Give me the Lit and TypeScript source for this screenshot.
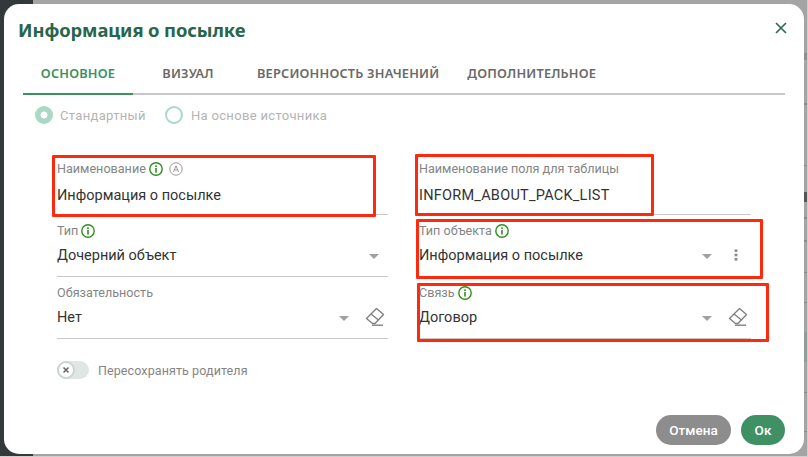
import { LitElement, html, css } from "lit";
import { customElement } from "lit/decorators.js";

const info = html`<svg class="ico" width="14" height="14" viewBox="0 0 14 14"><circle cx="7" cy="7" r="6.2" fill="none" stroke="#2f8f1f" stroke-width="1.4"/><rect x="6.2" y="6" width="1.6" height="4.6" fill="#2f8f1f"/><rect x="6.2" y="3.3" width="1.6" height="1.7" fill="#2f8f1f"/></svg>`;
const auto = html`<svg class="ico" width="14" height="14" viewBox="0 0 14 14"><circle cx="7" cy="7" r="6.2" fill="none" stroke="#999" stroke-width="1"/><path d="M4.4 10 L7 3.8 L9.6 10 M5.3 8 H8.7" fill="none" stroke="#999" stroke-width="1"/></svg>`;
const eraser = html`<svg class="eraser" width="20" height="20" viewBox="0 0 20 20"><path d="M11.5 1.5 L18.5 7.5 L10 16.5 H7.5 L1.5 11.5 Z M6 7 L13.5 13" fill="none" stroke="#808080" stroke-width="1.4" stroke-linejoin="round"/><path d="M7 18.2 H18" stroke="#808080" stroke-width="1.4"/></svg>`;
const kebab = html`<svg width="4" height="12" viewBox="0 0 4 12"><rect x="0.6" y="0.4" width="2.8" height="2.6" fill="#8a8a8a"/><rect x="0.6" y="4.7" width="2.8" height="2.6" fill="#8a8a8a"/><rect x="0.6" y="9" width="2.8" height="2.6" fill="#8a8a8a"/></svg>`;
const arrow = html`<span class="arrow"></span>`;

@customElement("app-root")
export class AppRoot extends LitElement {
  static styles = css`
    :host { display: block; width: 808px; height: 457px; box-sizing: border-box; padding: 4px 4px 3px 4px; overflow: hidden;
      box-shadow: inset -1px -1px 0 #cfcfcf;
      background:
        linear-gradient(180deg, transparent 53px, #8f8f8f 53px 60px, transparent 60px 103px, #8a8a8a 103px 105px, transparent 105px 165px, #8a8a8a 165px 166px, transparent 166px 192px, #555 192px 202px, transparent 202px 217px, #8a8a8a 217px 219px, transparent 219px 240px, #8a8a8a 240px 242px, transparent 242px 272px, #8a8a8a 272px 273px, transparent 273px 302px, #8a8a8a 302px 303px, transparent 303px 332px, #8e9e9a 332px 362px, transparent 362px 392px, #8a8a8a 392px 393px, transparent 393px 431px, #8a8a8a 431px 432px, transparent 432px) right 1px top 0 / 3px 100% no-repeat,
        linear-gradient(90deg, #33383b 33px, #a4a4a4 33px);
      font-family: "Roboto", "Noto Sans", sans-serif; }
    .dialog { position: relative; height: 450px; background: #fff; border-radius: 15px; display: flex; flex-direction: column; box-sizing: border-box; }
    .head { display: flex; justify-content: space-between; align-items: flex-start; padding: 14px 17px 0 14px; height: 47px; box-sizing: border-box; }
    .title { font-size: 18.4px; line-height: 24px; font-weight: 700; color: #27654d; font-family: "Noto Sans", sans-serif; letter-spacing: -0.1px; }
    .close { margin-top: 4px; }
    .tabs { display: flex; margin: 0 19px 0 19px; height: 42px; border-bottom: 2px solid #c8c8c8; box-sizing: content-box; }
    .tab { min-width: 110px; box-sizing: border-box; padding: 10px 14px 0; text-align: center; font-size: 12.8px; line-height: 24px; font-weight: 600; letter-spacing: 0.18px; color: #6a6a6a; white-space: nowrap; height: 44px; font-family: "Noto Sans", sans-serif; }
    .tab.active { color: #3c9161; border-bottom: 2px solid #3c9161; }
    .radios { display: flex; align-items: center; padding: 11px 0 0 31px; height: 18px; font-size: 13px; color: #b4b4b4; letter-spacing: 0.33px; }
    .radio { width: 18px; height: 18px; border-radius: 50%; box-sizing: border-box; margin-right: 7px; flex: none; }
    .radio.on { background: radial-gradient(circle, #fff 0 3.2px, #a9d9c5 3.8px); }
    .radio.off { border: 2px solid #a9d9c5; margin-left: 19px; margin-right: 8px; }
    .grid { display: grid; grid-template-columns: 331px 332px; column-gap: 31px; grid-auto-rows: 62px; margin: 29px 0 0 53px; }
    .field { border-bottom: 1px solid #c8c8c8; box-sizing: border-box; padding-top: 7px; display: flex; flex-direction: column; }
    .label { display: flex; align-items: center; gap: 3px; font-size: 12.6px; line-height: 18px; height: 18px; color: #858585; white-space: nowrap; }
    .label .ico + .ico { margin-left: 3px; }
    .row { display: flex; align-items: center; height: 26px; margin-top: 2px; font-size: 14.5px; color: #333; white-space: nowrap; }
    .field:nth-child(-n+2) .row { margin-top: 4px; }
    .val { flex: 1; }
    .code { letter-spacing: 0.25px; }
    .arrow { width: 0; height: 0; border-left: 5px solid transparent; border-right: 5px solid transparent; border-top: 5px solid #a0a0a0; margin-top: 2px; }
    .slot { width: 39px; display: flex; justify-content: flex-end; box-sizing: border-box; }
    .slot.k { padding-right: 13px; }
    .slot.e { padding-right: 3px; }
    .plain { padding-right: 9px; }
    .toggle { display: flex; align-items: center; gap: 9px; margin: 22px 0 0 53px; height: 18px; font-size: 12.5px; color: #858585; letter-spacing: 0.1px; }
    .track { width: 32px; height: 18px; border-radius: 9px; background: #e0e6e4; position: relative; flex: none; }
    .knob { position: absolute; left: 0; top: 0; width: 18px; height: 18px; border-radius: 50%; background: #fff; border: 2px solid #ccd5d3; box-sizing: border-box; display: flex; align-items: center; justify-content: center; }
    .foot { margin-top: auto; display: flex; justify-content: flex-end; gap: 10px; padding: 0 19px 9px 0; }
    .btn { height: 30px; border-radius: 15px; color: #fff; font-size: 13.5px; font-weight: 500; line-height: 30px; text-align: center; }
    .cancel { width: 75px; background: #8d8d8d; }
    .ok { width: 44px; background: #3f9163; }
    .mark { position: absolute; border: 3px solid #ff2a0d; box-sizing: border-box; border-radius: 1px; pointer-events: none; }
    .m1 { left: 48px; top: 151px; width: 324px; height: 62px; }
    .m2 { left: 411px; top: 150px; width: 239px; height: 62px; }
    .m3 { left: 412px; top: 215px; width: 347px; height: 60px; }
    .m4 { left: 413px; top: 279px; width: 352px; height: 59px; }
  `;

  field(label: unknown, value: unknown, tail: unknown, plain = false) {
    return html`<div class="field"><div class="label">${label}</div><div class="row ${plain ? "plain" : ""}"><span class="val">${value}</span>${tail}</div></div>`;
  }

  render() {
    return html`<div class="dialog">
      <div class="head">
        <div class="title">Информация о посылке</div>
        <svg class="close" width="12" height="12" viewBox="0 0 12 12"><path d="M1 1 L11 11 M11 1 L1 11" stroke="#2f6b55" stroke-width="1.7"/></svg>
      </div>
      <div class="tabs">
        <div class="tab active">ОСНОВНОЕ</div><div class="tab">ВИЗУАЛ</div><div class="tab">ВЕРСИОННОСТЬ ЗНАЧЕНИЙ</div><div class="tab">ДОПОЛНИТЕЛЬНОЕ</div>
      </div>
      <div class="radios"><span class="radio on"></span><span>Стандартный</span><span class="radio off"></span><span>На основе источника</span></div>
      <div class="grid">
        ${this.field(html`Наименование ${info} ${auto}`, "Информация о посылке", "")}
        ${this.field(html`Наименование поля для таблицы`, html`<span class="code">INFORM_ABOUT_PACK_LIST</span>`, "")}
        ${this.field(html`Тип ${info}`, "Дочерний объект", arrow, true)}
        ${this.field(html`Тип объекта ${info}`, "Информация о посылке", html`${arrow}<span class="slot k">${kebab}</span>`)}
        ${this.field(html`Обязательность`, "Нет", html`${arrow}<span class="slot e">${eraser}</span>`)}
        ${this.field(html`Связь ${info}`, "Договор", html`${arrow}<span class="slot e">${eraser}</span>`)}
      </div>
      <div class="toggle"><span class="track"><span class="knob"><svg width="8" height="8" viewBox="0 0 8 8"><path d="M1.5 1.5 L6.5 6.5 M6.5 1.5 L1.5 6.5" stroke="#666" stroke-width="1.5"/></svg></span></span><span>Пересохранять родителя</span></div>
      <div class="foot"><div class="btn cancel">Отмена</div><div class="btn ok">Ок</div></div>
      <div class="mark m1"></div><div class="mark m2"></div><div class="mark m3"></div><div class="mark m4"></div>
    </div>`;
  }
}
